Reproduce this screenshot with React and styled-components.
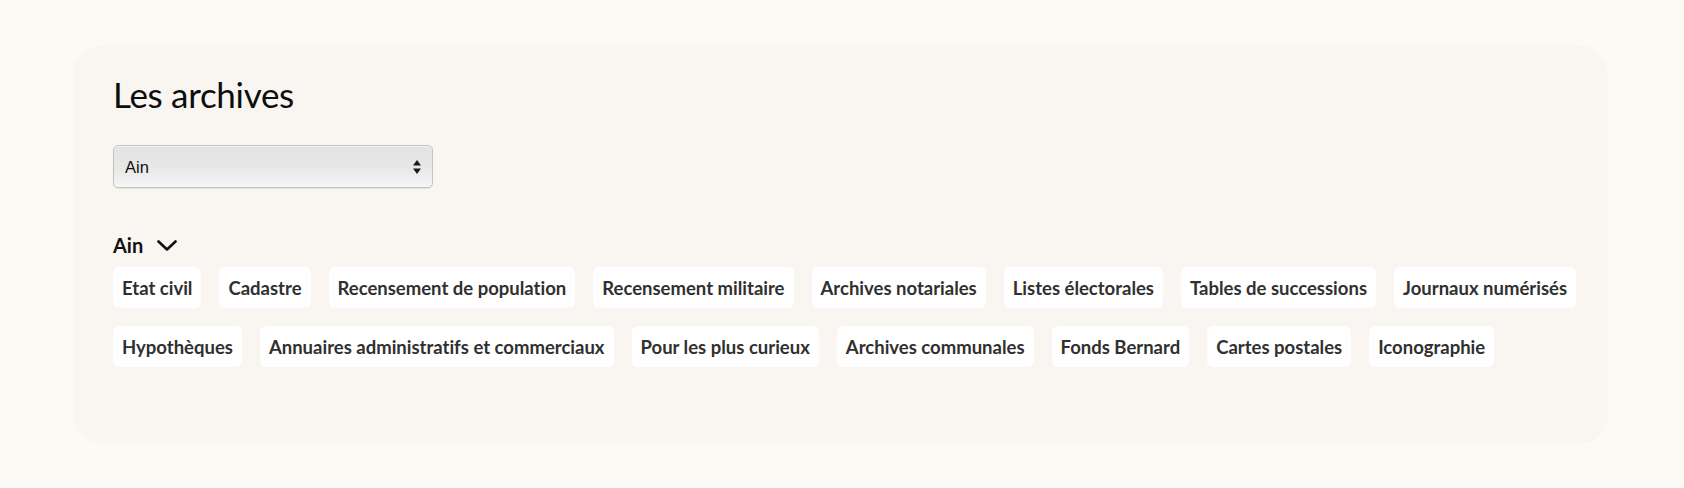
import styled, { createGlobalStyle } from "styled-components";

const GlobalStyle = createGlobalStyle`
  html, body {
    margin: 0;
    padding: 0;
    background: #fdf9f5;
  }
  body {
    font-family: "Lato", "Noto Sans", sans-serif;
    font-variant-ligatures: none;
  }
`;

const archives = [
  "Etat civil",
  "Cadastre",
  "Recensement de population",
  "Recensement militaire",
  "Archives notariales",
  "Listes électorales",
  "Tables de successions",
  "Journaux numérisés",
  "Hypothèques",
  "Annuaires administratifs et commerciaux",
  "Pour les plus curieux",
  "Archives communales",
  "Fonds Bernard",
  "Cartes postales",
  "Iconographie",
];

export default function App() {
  return (
    <>
      <GlobalStyle />
      <Page>
        <Card>
          <Title>Les archives</Title>
          <SelectWrap>
            <Select defaultValue="ain">
              <option value="ain">Ain</option>
              <option value="aisne">Aisne</option>
              <option value="allier">Allier</option>
            </Select>
            <Arrows viewBox="0 0 8 14">
              <path d="M4 0 L8 5.5 L0 5.5 Z" />
              <path d="M0 8.5 L8 8.5 L4 14 Z" />
            </Arrows>
          </SelectWrap>
          <Section>
            <SectionHead>
              <span>Ain</span>
              <Chevron viewBox="0 0 20 11">
                <polyline points="1.5,1.5 10,9.5 18.5,1.5" />
              </Chevron>
            </SectionHead>
            <Chips>
              {archives.map((label) => (
                <Chip key={label}>{label}</Chip>
              ))}
            </Chips>
          </Section>
        </Card>
      </Page>
    </>
  );
}

const Page = styled.div`
  padding: 45px 76px 45px 73px;
`;

const Card = styled.div`
  background: #f9f5f1;
  border-radius: 30px;
  padding: 21px 30px 77px 40px;
  display: flex;
  flex-direction: column;
  align-items: flex-start;
`;

const Title = styled.h1`
  margin: 0;
  font-family: "Lato", sans-serif;
  font-weight: 400;
  font-size: 35px;
  line-height: 56px;
  color: #0d0d0d;
  letter-spacing: -0.3px;
`;

const SelectWrap = styled.div`
  position: relative;
  margin-top: 23px;
`;

const Select = styled.select`
  appearance: none;
  width: 320px;
  height: 43px;
  padding: 0 30px 0 11px;
  border: 1px solid #c4c4c4;
  border-radius: 5px;
  background: linear-gradient(#e3e3e3 0%, #e8e8e8 55%, #f6f6f6 100%);
  box-shadow: inset 0 1px 0 #f2f2f2, 0 1px 1px rgba(0, 0, 0, 0.08);
  font-family: "Liberation Sans", "Noto Sans", sans-serif;
  font-size: 16.5px;
  color: #111;
  outline: none;
`;

const Arrows = styled.svg`
  position: absolute;
  right: 12px;
  top: 15px;
  width: 8px;
  height: 14px;
  fill: #1a1a1a;
  pointer-events: none;
`;

const Section = styled.div`
  margin-top: 44px;
  display: flex;
  flex-direction: column;
  gap: 9px;
`;

const SectionHead = styled.div`
  display: flex;
  align-items: center;
  gap: 14px;
  font-family: "Lato", sans-serif;
  font-weight: 700;
  font-size: 20px;
  line-height: 26px;
  color: #111;
`;

const Chevron = styled.svg`
  width: 20px;
  height: 11px;
  fill: none;
  stroke: #111;
  stroke-width: 2.6;
  stroke-linecap: round;
  stroke-linejoin: round;
`;

const Chips = styled.div`
  display: flex;
  flex-wrap: wrap;
  gap: 18px;
`;

const Chip = styled.div`
  background: #ffffff;
  border-radius: 6px;
  padding: 0 9px;
  height: 41px;
  display: flex;
  align-items: center;
  font-family: "Lato", sans-serif;
  font-weight: 700;
  font-size: 18.5px;
  color: #303030;
  white-space: nowrap;
`;
